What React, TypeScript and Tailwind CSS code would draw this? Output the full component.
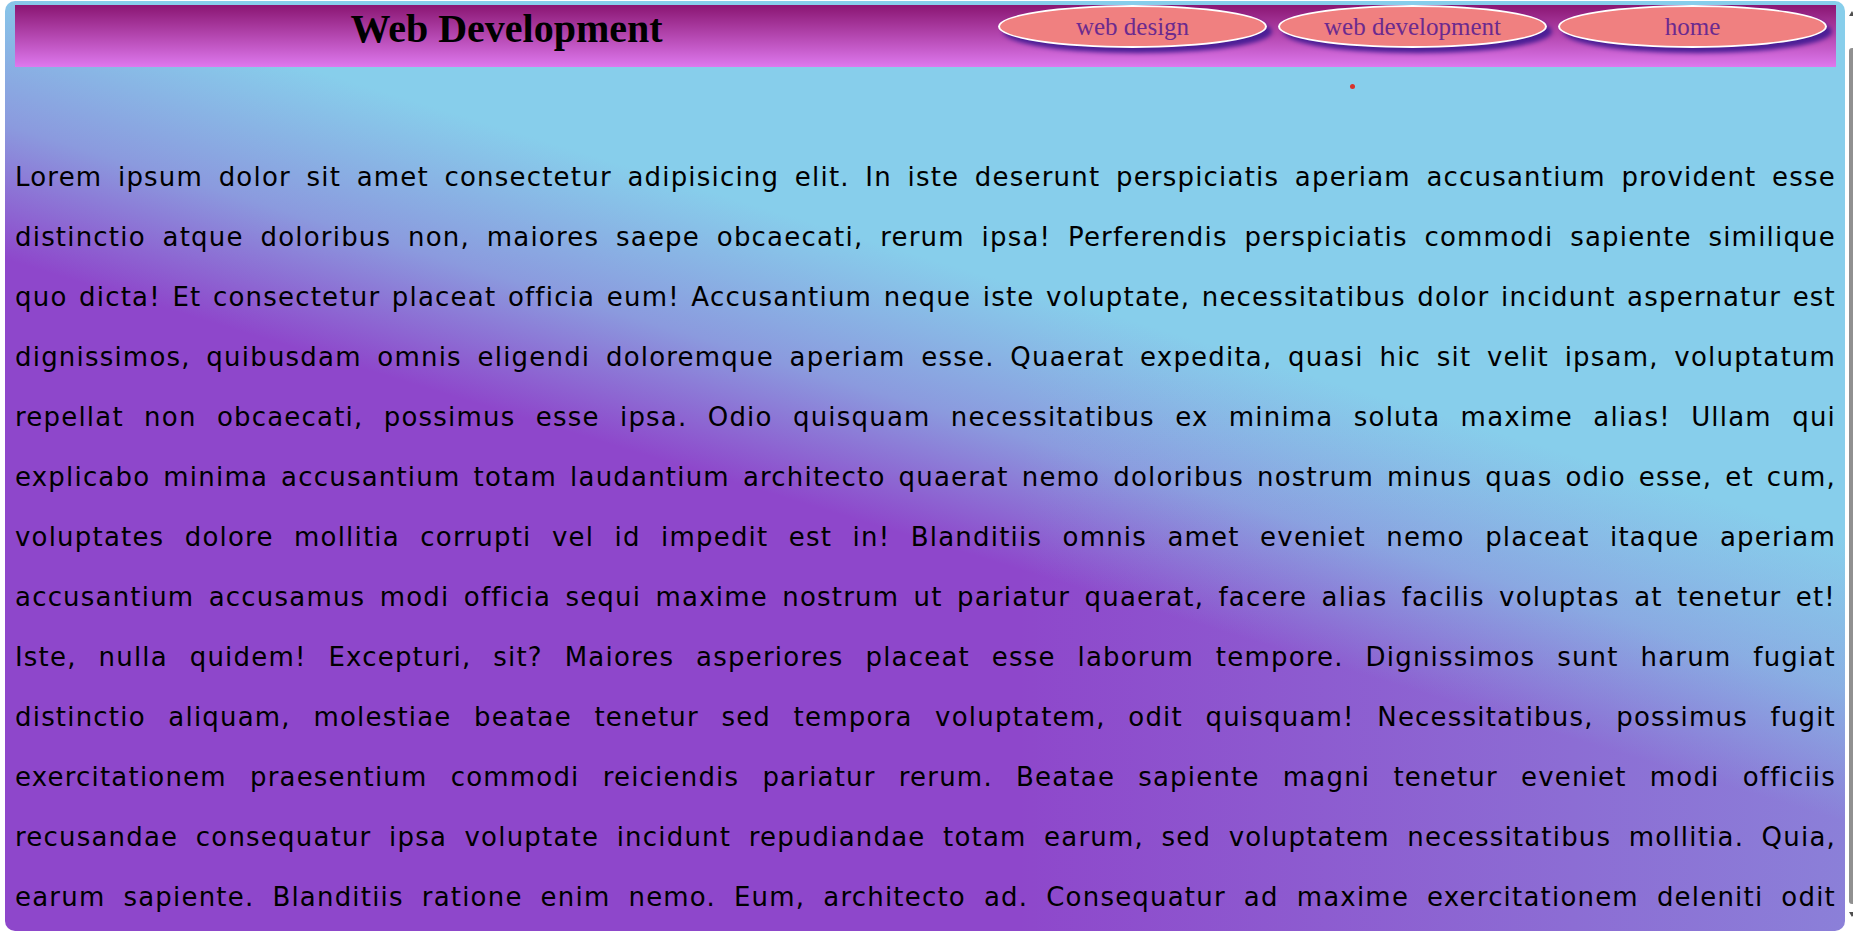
import React from "react";

const LINES = [
  "Lorem ipsum dolor sit amet consectetur adipisicing elit. In iste deserunt perspiciatis aperiam accusantium provident esse",
  "distinctio atque doloribus non, maiores saepe obcaecati, rerum ipsa! Perferendis perspiciatis commodi sapiente similique",
  "quo dicta! Et consectetur placeat officia eum! Accusantium neque iste voluptate, necessitatibus dolor incidunt aspernatur est",
  "dignissimos, quibusdam omnis eligendi doloremque aperiam esse. Quaerat expedita, quasi hic sit velit ipsam, voluptatum",
  "repellat non obcaecati, possimus esse ipsa. Odio quisquam necessitatibus ex minima soluta maxime alias! Ullam qui",
  "explicabo minima accusantium totam laudantium architecto quaerat nemo doloribus nostrum minus quas odio esse, et cum,",
  "voluptates dolore mollitia corrupti vel id impedit est in! Blanditiis omnis amet eveniet nemo placeat itaque aperiam",
  "accusantium accusamus modi officia sequi maxime nostrum ut pariatur quaerat, facere alias facilis voluptas at tenetur et!",
  "Iste, nulla quidem! Excepturi, sit? Maiores asperiores placeat esse laborum tempore. Dignissimos sunt harum fugiat",
  "distinctio aliquam, molestiae beatae tenetur sed tempora voluptatem, odit quisquam! Necessitatibus, possimus fugit",
  "exercitationem praesentium commodi reiciendis pariatur rerum. Beatae sapiente magni tenetur eveniet modi officiis",
  "recusandae consequatur ipsa voluptate incidunt repudiandae totam earum, sed voluptatem necessitatibus mollitia. Quia,",
  "earum sapiente. Blanditiis ratione enim nemo. Eum, architecto ad. Consequatur ad maxime exercitationem deleniti odit",
];

const NAV = ["web design", "web development", "home"];

export default function App() {
  return (
    <div className="flex h-[933px] w-full overflow-hidden bg-white">
      <div className="ml-[5px] mt-[1px] h-[930px] w-[1840px] shrink-0 overflow-hidden rounded-[10px] bg-[linear-gradient(to_right,rgba(135,206,235,0)_55%,rgba(135,206,235,0.42)_100%),linear-gradient(197deg,#87ceeb_0%,#87ceeb_36%,#8b9ade_46%,#8e47cb_55%,#8e47cb_100%)] pl-[10px] pr-[9px] pt-[4px]">
        <header className="flex h-[62px] bg-[linear-gradient(to_bottom,#8a1672,#de78ee)]">
          <div className="flex flex-1 justify-center pt-[4px]">
            <h1 className="font-['Liberation_Serif',serif] text-[40px] font-bold leading-[40px] text-black">
              Web Development
            </h1>
          </div>
          <nav className="flex gap-[11px] pr-[9px]">
            {NAV.map((n) => (
              <a
                key={n}
                href="#"
                className="flex h-[43px] w-[269px] items-center justify-center rounded-[50%] border-2 border-white bg-[#f08080] font-['Liberation_Serif',serif] text-[25px] leading-[25px] text-[#6b2a8f] shadow-[5px_5px_4px_#4b1f96]"
              >
                {n}
              </a>
            ))}
          </nav>
        </header>
        <div className="h-[80px] pl-[1335px] pt-[17px]">
          <div className="size-[5px] rounded-full bg-[#d8322c]" />
        </div>
        <p className="font-['DejaVu_Sans',sans-serif] text-[26px] leading-[60px] tracking-[1.2px] text-black">
          {LINES.map((l, i) => (
            <span key={i} className="block text-justify [text-align-last:justify]">
              {l}
            </span>
          ))}
        </p>
      </div>
      <div className="flex flex-1 flex-col pl-[4px] pt-[11px] pb-[16px]">
        <div className="h-0 w-0 border-x-[3px] border-b-[5px] border-x-transparent border-b-[#505050]" />
        <div className="mt-[32px] w-[6px] flex-1 rounded-l-[3px] bg-[#909090]" />
        <div className="mt-[8px] h-0 w-0 border-x-[3px] border-t-[5px] border-x-transparent border-t-[#505050]" />
      </div>
    </div>
  );
}
